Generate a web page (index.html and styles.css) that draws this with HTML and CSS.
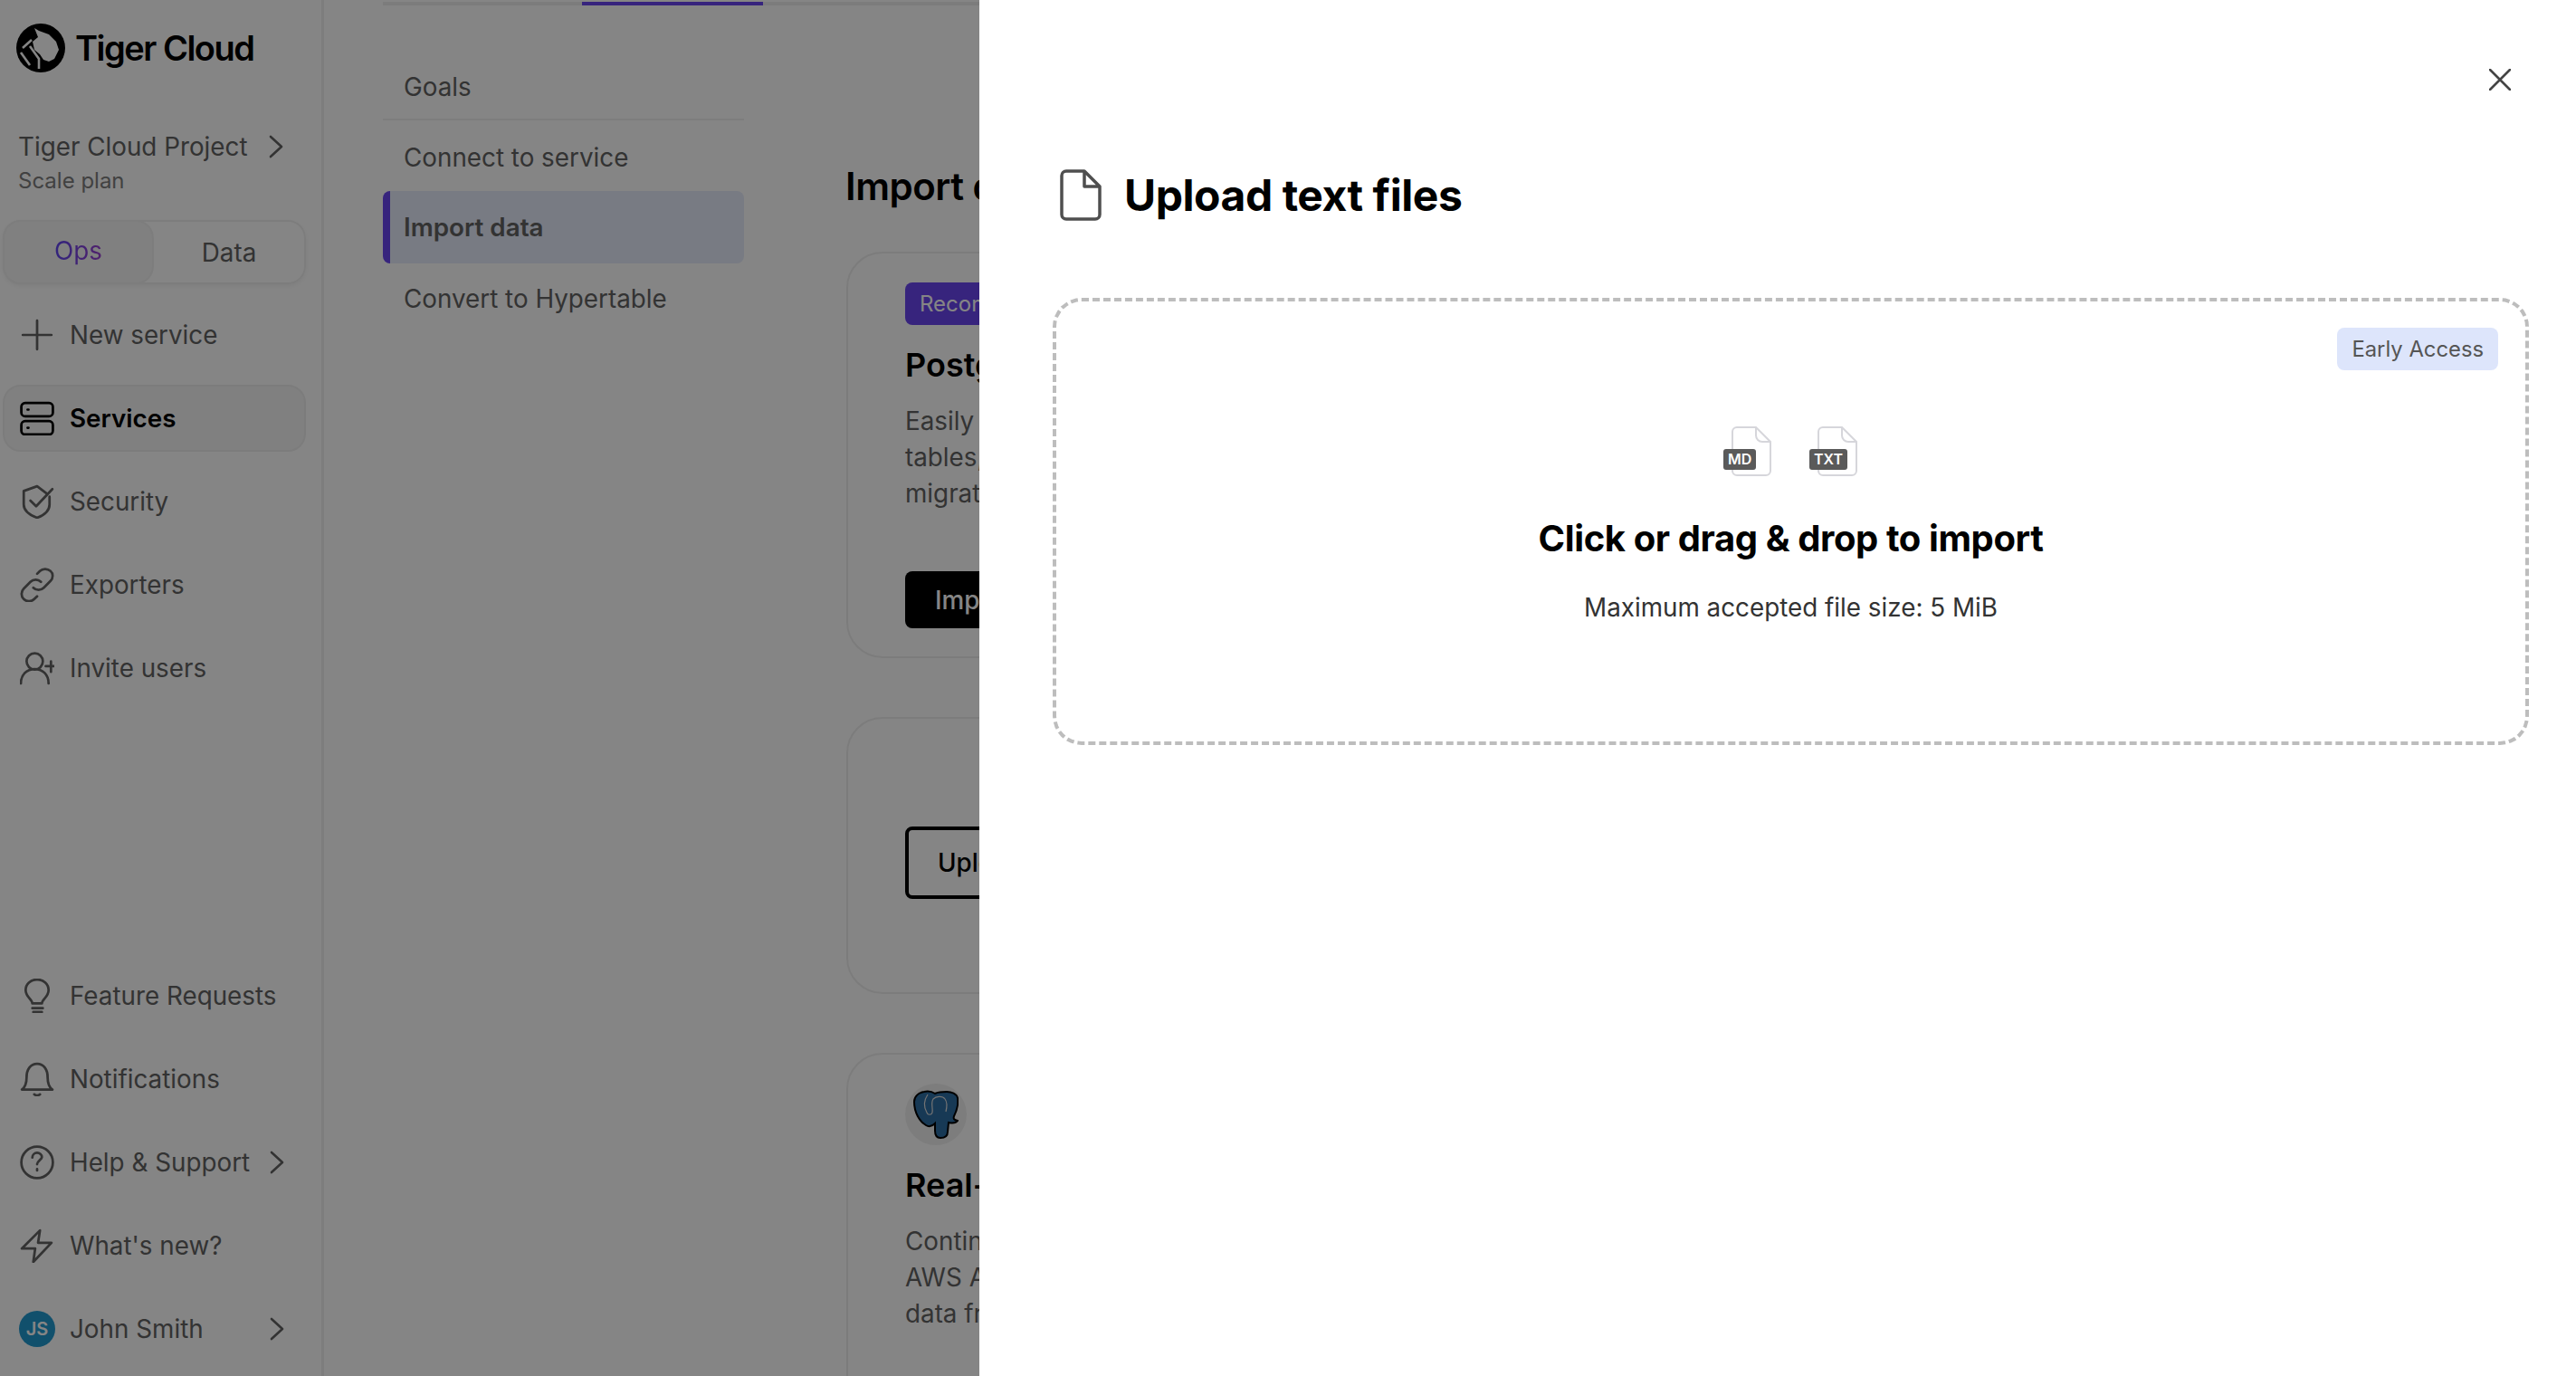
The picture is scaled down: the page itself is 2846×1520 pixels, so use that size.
FILE: index.html
```html
<!DOCTYPE html>
<html lang="en">
<head>
  <meta charset="UTF-8" />
  <title>Tiger Cloud</title>
  <link rel="stylesheet" href="styles.css">
</head>
<body>
  <div class="page">
    <aside class="sidebar">
      <div class="brand">
        <svg class="logo" viewBox="0 0 54 54">
          <circle cx="27" cy="27" r="27" fill="#000"/>
          <path d="M20 5l5 3 11 4 8 8 3 9-5 10-6 3-6-2-4-6-6-5-2-9 6-5z" fill="#fff"/>
          <path d="M7 27l10-9M5 32l10 14M15 25l10 14v11" fill="none" stroke="#fff" stroke-width="2.6"/>
        </svg>
        <span class="brand-name">Tiger Cloud</span>
      </div>

      <div class="project">
        <div class="project-row">
          <span class="project-name">Tiger Cloud Project</span>
          <svg class="chevron" viewBox="0 0 16 26"><path d="M2 2l12 11L2 24"/></svg>
        </div>
        <div class="project-plan">Scale plan</div>
      </div>

      <div class="tabs">
        <div class="tab tab-active"><span class="tab-label">Ops</span></div>
        <div class="tab">Data</div>
      </div>

      <nav class="nav">
        <a class="nav-item">
          <svg class="icon" viewBox="0 0 36 36"><path d="M18 3v30M3 18h30"/></svg>
          New service
        </a>
        <a class="nav-item nav-current">
          <svg class="icon" viewBox="0 0 36 36"><rect x="1.5" y="2" width="33" height="14" rx="4"/><rect x="1.5" y="21" width="33" height="14" rx="4"/><path d="M8 9h1M8 28h1"/></svg>
          Services
        </a>
        <a class="nav-item">
          <svg class="icon" viewBox="0 0 36 36"><path d="M28 9.500L18 2 4 7v14c0 6 6 11 14 14 8-3 13-8 13-14v-8"/><path d="M11 17l6 6L34 5"/></svg>
          Security
        </a>
        <a class="nav-item">
          <svg class="icon" viewBox="0 0 36 36"><path d="M14 21c3 3 8 3 11 0l7-7c3-3 3-8 0-10.500s-8-3-11 0l-3 3"/><path d="M22 15c-3-3-8-3-11 0l-7 7c-3 3-3 8 0 11s8 3 11 0l3-3"/></svg>
          Exporters
        </a>
        <a class="nav-item">
          <svg class="icon" viewBox="0 0 36 36"><circle cx="15.500" cy="11" r="8.500"/><path d="M1 34c0-9 6-15 14.500-15S30 25 30 34M27 16h11M32.500 11v11"/></svg>
          Invite users
        </a>
      </nav>

      <nav class="nav nav-bottom">
        <a class="nav-item">
          <svg class="icon" viewBox="0 0 36 36"><path d="M13 26c0-4-7-7-7-14C6 6 11 1 18 1s12 5 12 11c0 7-7 10-7 14zM13 31h11M14 35h9"/></svg>
          Feature Requests
        </a>
        <a class="nav-item">
          <svg class="icon" viewBox="0 0 36 36"><path d="M2 29c4-3 5-7 5-13C7 8 11 2 18 2s11 6 11 14c0 6 1 10 5 13zM15 34c2 1.500 4 1.500 6 0"/></svg>
          Notifications
        </a>
        <a class="nav-item">
          <svg class="icon" viewBox="0 0 36 36"><circle cx="18" cy="18" r="16.500"/><path d="M13 13c0-3 2.500-5 5-5s5 2 5 4.500-5 4-5 7.500M18 25v1.500"/></svg>
          Help &amp; Support
          <svg class="chevron nav-chevron" viewBox="0 0 16 26"><path d="M2 2l12 11L2 24"/></svg>
        </a>
        <a class="nav-item">
          <svg class="icon" viewBox="0 0 36 36"><path d="M21 2L2 21h14l-2 14 19-20H19z"/></svg>
          What's new?
        </a>
        <a class="nav-item">
          <span class="avatar">JS</span>
          John Smith
          <svg class="chevron nav-chevron" viewBox="0 0 16 26"><path d="M2 2l12 11L2 24"/></svg>
        </a>
      </nav>
    </aside>

    <main class="main">
      <div class="progress"><div class="progress-step"></div></div>
      <div class="main-body">
        <ul class="steps">
          <li class="step step-line">Goals</li>
          <li class="step step-connect">Connect to service</li>
          <li class="step step-current">Import data</li>
          <li class="step">Convert to Hypertable</li>
        </ul>
        <section class="content">
          <h2 class="content-title">Import data</h2>
          <div class="card card-first">
            <span class="badge">Recommended</span>
            <h3 class="card-title">PostgreSQL</h3>
            <p class="card-text">Easily migrate your database,<br>tables, and data with live<br>migration tooling</p>
            <button class="btn btn-dark">Import</button>
          </div>
          <div class="card card-second">
            <button class="btn btn-outline">Upload</button>
          </div>
          <div class="card">
            <div class="pg-icon">
              <svg viewBox="0 0 50 54" width="50" height="54">
                <path d="M12 2c5-1 9 0 12 2 4-2 8-2 13-2 5 0 11 2 12 7 1 7-1 14-4 20-1 3 0 4 4 5-2 3-6 3-10 2l-1 10c0 5-3 7-8 7-4 0-6-3-6-8v-8c-3 3-7 4-10 2C7 35 1 25 1 13 1 7 6 3 12 2z" fill="#2d6da3" stroke="#000" stroke-width="2"/>
                <path d="M16 5c-4 6-5 13-1 20 1 3 5 3 6 0 1-5-2-10 1-15 3-3 10-4 13 0 3 4 2 10 1 14" fill="none" stroke="#ddd" stroke-width="1.200"/>
              </svg>
            </div>
            <h3 class="card-title">Real-time sync</h3>
            <p class="card-text">Continuously replicate from<br>AWS Aurora, RDS, and<br>data from other sources</p>
          </div>
        </section>
      </div>
    </main>

    <div class="overlay"></div>

    <section class="drawer">
      <div class="drawer-close">
        <svg viewBox="0 0 24 24" width="24" height="24"><path d="M1 1l22 22M23 1L1 23"/></svg>
      </div>
      <div class="drawer-head">
        <svg class="drawer-icon" viewBox="0 0 46 57"><path d="M27 2H7a5 5 0 0 0-5 5v43a5 5 0 0 0 5 5h32a5 5 0 0 0 5-5V19zM27 2v17h17"/></svg>
        <h1 class="drawer-title">Upload text files</h1>
      </div>
      <div class="dropzone">
        <span class="early">Early Access</span>
        <div class="file-icons">
          <div class="file-icon">
            <svg viewBox="0 0 44 55"><path d="M27 1H6a5 5 0 0 0-5 5v43a5 5 0 0 0 5 5h32a5 5 0 0 0 5-5V17zM27 1v9a7 7 0 0 0 7 7h9"/></svg>
            <span class="file-tag">MD</span>
          </div>
          <div class="file-icon">
            <svg viewBox="0 0 44 55"><path d="M27 1H6a5 5 0 0 0-5 5v43a5 5 0 0 0 5 5h32a5 5 0 0 0 5-5V17zM27 1v9a7 7 0 0 0 7 7h9"/></svg>
            <span class="file-tag">TXT</span>
          </div>
        </div>
        <div class="drop-title">Click or drag &amp; drop to import</div>
        <div class="drop-note">Maximum accepted file size: 5 MiB</div>
      </div>
    </section>
  </div>
</body>
</html>
```

FILE: styles.css
```css
* {
  box-sizing: border-box;
}

body {
  margin: 0;
  font-family: Inter, "Noto Sans", sans-serif;
  color: #000;
}

.page {
  position: relative;
  display: flex;
  height: 100vh;
  overflow: hidden;
  background: #fff;
}

/* sidebar */
.sidebar {
  flex: 0 0 358px;
  display: flex;
  flex-direction: column;
  padding: 0 17px 0 3px;
  border-right: 3px solid #f0f0f0;
}

.brand {
  display: flex;
  align-items: center;
  gap: 11px;
  height: 54px;
  margin: 26px 0 0 15px;
}

.logo {
  width: 54px;
  height: 54px;
  flex: none;
}

.brand-name {
  font-size: 38px;
  font-weight: 600;
  letter-spacing: -1.5px;
}

.project {
  margin: 62px 0 0 17px;
}

.project-row {
  display: flex;
  align-items: center;
  justify-content: space-between;
  padding-right: 25px;
  height: 40px;
}

.project-name {
  font-size: 27.8px;
  color: #636363;
}

.chevron {
  width: 16px;
  height: 26px;
  fill: none;
  stroke: #636363;
  stroke-width: 2.6;
  stroke-linecap: round;
  stroke-linejoin: round;
}

.project-plan {
  margin-top: 3px;
  font-size: 24px;
  color: #7e7e7e;
}

.tabs {
  display: flex;
  height: 71px;
  margin-top: 29px;
  border: 2px solid #f0f0f0;
  border-radius: 20px;
  box-shadow: 0 2px 4px rgba(0, 0, 0, 0.05);
}

.tab {
  flex: 1;
  display: flex;
  align-items: center;
  justify-content: center;
  font-size: 27.8px;
  color: #636363;
}

.tab-active {
  flex: 0 0 167px;
  margin: -2px 0 -2px -2px;
  padding-bottom: 3px;
  border: 2px solid #f0f0f0;
  border-radius: 20px;
  background: #f5f5f5;
}

.tab-label {
  background: linear-gradient(to right, #5f45f0, #9a40d0);
  -webkit-background-clip: text;
  background-clip: text;
  color: transparent;
}

.nav {
  display: flex;
  flex-direction: column;
}

.nav:not(.nav-bottom) {
  margin-top: 19px;
}

.nav-bottom {
  margin-top: auto;
  padding-bottom: 15px;
}

.nav-item {
  position: relative;
  display: flex;
  align-items: center;
  gap: 17px;
  height: 74px;
  margin-bottom: 18px;
  padding-left: 17px;
  font-size: 27.8px;
  color: #636363;
  border: 2px solid transparent;
  border-radius: 20px;
}

.nav-bottom .nav-item:last-child {
  margin-bottom: 0;
}

.nav-current {
  font-weight: 600;
  color: #000;
  background: #f5f5f5;
  border-color: #eee;
}

.icon {
  width: 38px;
  height: 38px;
  flex: none;
  fill: none;
  stroke: #636363;
  stroke-width: 2.6;
  stroke-linecap: round;
  stroke-linejoin: round;
}

.nav-current .icon {
  stroke: #000;
}

.nav-chevron {
  position: absolute;
  right: 22px;
}

.avatar {
  width: 40px;
  height: 40px;
  margin: 0 -1px;
  flex: none;
  display: flex;
  align-items: center;
  justify-content: center;
  border-radius: 50%;
  background: #2299d0;
  color: #fff;
  font-size: 20px;
  font-weight: 600;
}

/* main column behind the drawer */
.main {
  flex: 1;
  min-width: 0;
  padding-left: 65px;
}

.progress {
  height: 4px;
  margin-top: 2px;
  background: #eee;
}

.progress-step {
  width: 200px;
  height: 4px;
  margin-left: 220px;
  background: #6a45f0;
}

.main-body {
  display: flex;
  gap: 113px;
}

.steps {
  flex: 0 0 399px;
  margin: 49px 0 0;
  padding: 0;
  list-style: none;
}

.step {
  display: flex;
  align-items: center;
  height: 78px;
  padding-left: 23px;
  font-size: 27.8px;
  color: #636363;
}

.step-line {
  padding-top: 6px;
  border-bottom: 2px solid #f0f0f0;
}

.step-connect {
  padding-top: 3px;
}

.step-current {
  border-left: 8px solid #6a45f0;
  padding-left: 15px;
  height: 80px;
  border-radius: 8px;
  background: #e6ecfb;
  font-weight: 600;
}

.content {
  flex: none;
  width: 1000px;
}

.content-title {
  margin: 175px 0 0 -1px;
  font-size: 42px;
  line-height: 50px;
  font-weight: 600;
  letter-spacing: -0.5px;
}

.card {
  padding: 32px 63px;
  height: 400px;
  margin-top: 65px;
  border: 2px solid #eee;
  border-radius: 40px;
}

.card-first {
  height: 449px;
  margin-top: 47px;
}

.card-second {
  height: 306px;
  padding-top: 119px;
}

.badge {
  display: inline-block;
  padding: 0 16px;
  border-radius: 8px;
  background: #6a45f0;
  color: #fff;
  font-size: 24px;
  line-height: 47px;
}

.card-title {
  margin: 22px 0 0;
  font-size: 36px;
  line-height: 44px;
  font-weight: 600;
}

.card-text {
  width: 600px;
  margin: 20px 0 0;
  font-size: 27.8px;
  line-height: 40px;
  color: #636363;
}

.btn {
  height: 63px;
  padding: 0 33px;
  border-radius: 8px;
  font: 500 27.8px Inter, sans-serif;
}

.btn-dark {
  margin-top: 66px;
  border: 0;
  background: #000;
  color: #fff;
}

.btn-outline {
  height: 80px;
  padding: 0 32px;
  border: 4px solid #000;
  background: #fff;
  color: #000;
}

.pg-icon {
  display: flex;
  align-items: center;
  justify-content: center;
  width: 68px;
  height: 68px;
  border-radius: 50%;
  background: #f0f0f0;
}

/* overlay + drawer */
.overlay {
  position: absolute;
  inset: 0;
  background: rgba(0, 0, 0, 0.48);
}

.drawer {
  position: absolute;
  top: 0;
  right: 0;
  bottom: 0;
  width: 1764px;
  padding: 0 52px 0 81px;
  background: #fff;
}

.drawer-close {
  position: absolute;
  top: 76px;
  right: 72px;
  line-height: 0;
}

.drawer-close path {
  fill: none;
  stroke: #444;
  stroke-width: 2.600;
  stroke-linecap: round;
}

.drawer-head {
  display: flex;
  align-items: center;
  gap: 25px;
  margin: 187px 0 0 8px;
}

.drawer-icon {
  width: 46px;
  height: 57px;
  flex: none;
  fill: none;
  stroke: #4f4f4f;
  stroke-width: 3.500;
  stroke-linejoin: round;
}

.drawer-title {
  margin: 0;
  font-size: 48px;
  line-height: 57px;
  font-weight: 650;
  letter-spacing: -0.45px;
}

.dropzone {
  position: relative;
  display: flex;
  flex-direction: column;
  align-items: center;
  height: 494px;
  margin-top: 85px;
  padding-top: 138px;
  border: 4px dashed #bdbdbd;
  border-radius: 32px;
}

.early {
  position: absolute;
  top: 29px;
  right: 30px;
  padding: 0 16px;
  border-radius: 8px;
  background: #dde5fb;
  color: #555;
  font-size: 23.8px;
  line-height: 47px;
}

.file-icons {
  display: flex;
  gap: 51px;
  padding-left: 8px;
}

.file-icon {
  position: relative;
  width: 44px;
  height: 55px;
}

.file-icon svg {
  display: block;
  width: 44px;
  height: 55px;
  fill: none;
  stroke: #d6d6db;
  stroke-width: 2;
}

.file-tag {
  position: absolute;
  top: 25px;
  left: -9px;
  padding: 0 5px;
  border-radius: 3px;
  background: #5a5a5a;
  color: #fff;
  font-size: 16px;
  font-weight: 600;
  line-height: 23px;
}

.drop-title {
  margin-top: 44px;
  font-size: 40px;
  line-height: 50px;
  font-weight: 650;
  letter-spacing: -0.4px;
}

.drop-note {
  margin-top: 31px;
  font-size: 27.8px;
  line-height: 40px;
  color: #333;
}
```
